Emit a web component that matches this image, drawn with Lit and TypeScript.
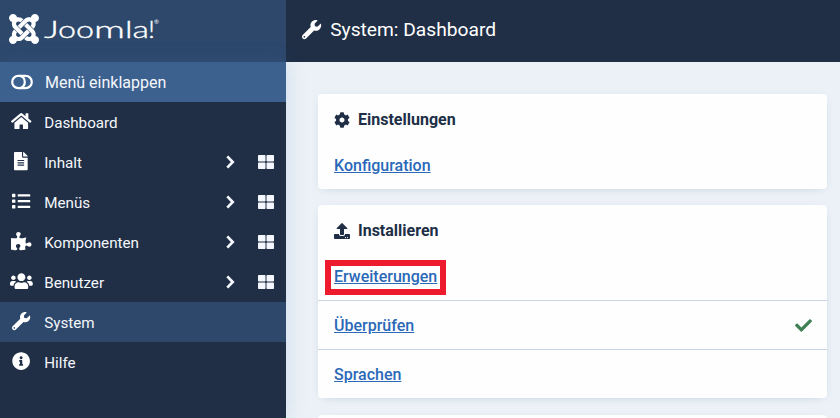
import { LitElement, html, svg, css } from "lit";
import { customElement, property } from "lit/decorators.js";
import { classMap } from "lit/directives/class-map.js";

const ICONS: Record<string, [string, string]> = {
  wrench: ["0 0 512 512", "M507.73 109.1c-2.24-9.03-13.54-12.09-20.12-5.51l-74.36 74.36-67.88-11.31-11.31-67.88 74.36-74.36c6.62-6.62 3.43-17.9-5.66-20.16-47.38-11.74-99.55.91-136.58 37.93-39.64 39.64-50.55 97.1-34.05 147.2L18.74 402.76c-24.99 24.99-24.99 65.51 0 90.5 24.99 24.99 65.51 24.99 90.5 0l213.21-213.21c50.12 16.71 107.47 5.68 147.37-34.22 37.07-37.07 49.7-89.32 37.91-136.73zM64 472c-13.25 0-24-10.75-24-24 0-13.26 10.75-24 24-24s24 10.74 24 24c0 13.25-10.75 24-24 24z"],
  home: ["0 0 576 512", "M280.37 148.26L96 300.11V464a16 16 0 0 0 16 16l112.06-.29a16 16 0 0 0 15.92-16V368a16 16 0 0 1 16-16h64a16 16 0 0 1 16 16v95.64a16 16 0 0 0 16 16.05L464 480a16 16 0 0 0 16-16V300L295.67 148.26a12.19 12.19 0 0 0-15.3 0zM571.6 251.47L488 182.56V44.05a12 12 0 0 0-12-12h-56a12 12 0 0 0-12 12v72.61L318.47 43a48 48 0 0 0-61 0L4.34 251.47a12 12 0 0 0-1.6 16.9l25.5 31A12 12 0 0 0 45.15 301l235.22-193.74a12.19 12.19 0 0 1 15.3 0L530.9 301a12 12 0 0 0 16.9-1.6l25.5-31a12 12 0 0 0-1.7-16.93z"],
  file: ["0 0 384 512", "M224 136V0H24C10.7 0 0 10.7 0 24v464c0 13.3 10.7 24 24 24h336c13.3 0 24-10.7 24-24V160H248c-13.2 0-24-10.8-24-24zm64 236c0 6.6-5.4 12-12 12H108c-6.6 0-12-5.4-12-12v-8c0-6.6 5.4-12 12-12h168c6.6 0 12 5.4 12 12v8zm0-64c0 6.6-5.4 12-12 12H108c-6.6 0-12-5.4-12-12v-8c0-6.6 5.4-12 12-12h168c6.6 0 12 5.4 12 12v8zm0-72v8c0 6.6-5.4 12-12 12H108c-6.6 0-12-5.4-12-12v-8c0-6.6 5.4-12 12-12h168c6.6 0 12 5.4 12 12zm96-114.1v6.1H256V0h6.1c6.4 0 12.5 2.5 17 7l97.9 98c4.5 4.5 7 10.6 7 16.9z"],
  list: ["0 0 512 512", "M80 368H16a16 16 0 0 0-16 16v64a16 16 0 0 0 16 16h64a16 16 0 0 0 16-16v-64a16 16 0 0 0-16-16zm0-320H16A16 16 0 0 0 0 64v64a16 16 0 0 0 16 16h64a16 16 0 0 0 16-16V64a16 16 0 0 0-16-16zm0 160H16a16 16 0 0 0-16 16v64a16 16 0 0 0 16 16h64a16 16 0 0 0 16-16v-64a16 16 0 0 0-16-16zm416 176H176a16 16 0 0 0-16 16v32a16 16 0 0 0 16 16h320a16 16 0 0 0 16-16v-32a16 16 0 0 0-16-16zm0-320H176a16 16 0 0 0-16 16v32a16 16 0 0 0 16 16h320a16 16 0 0 0 16-16V80a16 16 0 0 0-16-16zm0 160H176a16 16 0 0 0-16 16v32a16 16 0 0 0 16 16h320a16 16 0 0 0 16-16v-32a16 16 0 0 0-16-16z"],
  puzzle: ["0 0 576 512", "M519.442 288.651c-41.519 0-59.5 31.593-82.058 31.593C377.409 320.244 432 144 432 144s-196.288 80-196.288-3.297c0-35.827 36.288-46.25 36.288-85.985C272 19.216 243.885 0 210.539 0c-34.654 0-66.366 18.891-66.366 56.346 0 41.364 31.711 59.277 31.711 81.75C175.885 207.719 0 166.758 0 166.758v333.237s178.635 41.047 178.635-28.662c0-22.473-40-40.107-40-81.471 0-37.456 29.25-56.346 63.577-56.346 33.673 0 61.788 19.216 61.788 54.717 0 39.735-36.288 50.158-36.288 85.985 0 60.803 129.675 25.73 181.23 25.73 0 0-34.725-120.101 25.827-120.101 35.962 0 46.423 36.152 86.308 36.152C556.712 416 576 387.99 576 354.443c0-34.199-18.962-65.792-56.558-65.792z"],
  users: ["0 0 640 512", "M96 224c35.3 0 64-28.7 64-64s-28.7-64-64-64-64 28.7-64 64 28.7 64 64 64zm448 0c35.3 0 64-28.7 64-64s-28.7-64-64-64-64 28.7-64 64 28.7 64 64 64zm32 32h-64c-17.6 0-33.5 7.1-45.1 18.6 40.3 22.1 68.9 62 75.1 109.4h66c17.7 0 32-14.3 32-32v-32c0-35.3-28.7-64-64-64zm-256 0c61.9 0 112-50.1 112-112S381.9 32 320 32 208 82.1 208 144s50.1 112 112 112zm76.8 32h-8.3c-20.8 10-43.9 16-68.5 16s-47.6-6-68.5-16h-8.3C179.6 288 128 339.6 128 403.2V432c0 26.5 21.5 48 48 48h288c26.5 0 48-21.5 48-48v-28.8c0-63.6-51.6-115.2-115.2-115.2zm-223.7-13.4C161.5 263.1 145.6 256 128 256H64c-35.3 0-64 28.7-64 64v32c0 17.7 14.3 32 32 32h65.9c6.3-47.4 34.9-87.3 75.2-109.4z"],
  info: ["0 0 512 512", "M256 8C119.043 8 8 119.083 8 256c0 136.997 111.043 248 248 248s248-111.003 248-248C504 119.083 392.957 8 256 8zm0 110c23.196 0 42 18.804 42 42s-18.804 42-42 42-42-18.804-42-42 18.804-42 42-42zm56 254c0 6.627-5.373 12-12 12h-88c-6.627 0-12-5.373-12-12v-24c0-6.627 5.373-12 12-12h12v-64h-12c-6.627 0-12-5.373-12-12v-24c0-6.627 5.373-12 12-12h64c6.627 0 12 5.373 12 12v100h12c6.627 0 12 5.373 12 12v24z"],
  cog: ["0 0 512 512", "M487.4 315.7l-42.6-24.6c4.3-23.2 4.3-47 0-70.2l42.6-24.6c4.9-2.8 7.1-8.6 5.5-14-11.1-35.6-30-67.8-54.7-94.6-3.8-4.1-10-5.1-14.8-2.3L380.8 110c-17.9-15.4-38.5-27.3-60.8-35.1V25.8c0-5.6-3.9-10.5-9.4-11.7-36.7-8.2-74.3-7.8-109.2 0-5.5 1.2-9.4 6.1-9.4 11.7V75c-22.2 7.9-42.8 19.8-60.8 35.1L88.7 85.5c-4.9-2.8-11-1.9-14.8 2.3-24.7 26.7-43.6 58.9-54.7 94.6-1.7 5.4.6 11.2 5.5 14L67.3 221c-4.3 23.2-4.3 47 0 70.2l-42.6 24.6c-4.9 2.8-7.1 8.6-5.5 14 11.1 35.6 30 67.8 54.7 94.6 3.8 4.1 10 5.1 14.8 2.3l42.6-24.6c17.9 15.4 38.5 27.3 60.8 35.1v49.2c0 5.6 3.9 10.5 9.4 11.7 36.7 8.2 74.3 7.8 109.2 0 5.5-1.2 9.4-6.1 9.4-11.7v-49.2c22.2-7.9 42.8-19.8 60.8-35.1l42.6 24.6c4.9 2.8 11 1.9 14.8-2.3 24.7-26.7 43.6-58.9 54.7-94.6 1.5-5.5-.7-11.3-5.6-14.1zM256 336c-44.1 0-80-35.9-80-80s35.9-80 80-80 80 35.9 80 80-35.9 80-80 80z"],
  upload: ["0 0 512 512", "M296 384h-80c-13.3 0-24-10.7-24-24V192h-87.7c-17.8 0-26.7-21.5-14.1-34.1L242.3 5.7c7.5-7.5 19.8-7.5 27.3 0l152.2 152.2c12.6 12.6 3.7 34.1-14.1 34.1H320v168c0 13.3-10.7 24-24 24zm216-8v112c0 13.3-10.7 24-24 24H24c-13.3 0-24-10.7-24-24V376c0-13.3 10.7-24 24-24h136v8c0 30.9 25.1 56 56 56h80c30.9 0 56-25.1 56-56v-8h136c13.3 0 24 10.7 24 24zm-124 88c0-11-9-20-20-20s-20 9-20 20 9 20 20 20 20-9 20-20zm64 0c0-11-9-20-20-20s-20 9-20 20 9 20 20 20 20-9 20-20z"],
  check: ["0 0 512 512", "M173.898 439.404l-166.4-166.4c-9.997-9.997-9.997-26.206 0-36.204l36.203-36.204c9.997-9.998 26.207-9.998 36.204 0L192 312.69 432.095 72.596c9.997-9.997 26.207-9.997 36.204 0l36.203 36.204c9.997 9.997 9.997 26.206 0 36.204l-294.4 294.401c-9.998 9.997-26.207 9.997-36.204-.001z"],
  grid: ["0 0 512 512", "M296 32h192c13.255 0 24 10.745 24 24v160c0 13.255-10.745 24-24 24H296c-13.255 0-24-10.745-24-24V56c0-13.255 10.745-24 24-24zm-80 0H24C10.745 32 0 42.745 0 56v160c0 13.255 10.745 24 24 24h192c13.255 0 24-10.745 24-24V56c0-13.255-10.745-24-24-24zM0 296v160c0 13.255 10.745 24 24 24h192c13.255 0 24-10.745 24-24V296c0-13.255-10.745-24-24-24H24c-13.255 0-24 10.745-24 24zm296 184h192c13.255 0 24-10.745 24-24V296c0-13.255-10.745-24-24-24H296c-13.255 0-24 10.745-24 24v160c0 13.255 10.745 24 24 24z"],
  joomla: ["0 32 448 448", "M.6 92.1C.6 58.8 27.4 32 60.4 32c30 0 54.5 21.9 59.2 50.2 32.6-7.6 67.1.6 96.5 30l-44.3 44.3c-20.5-20.5-42.6-16.3-55.4-3.5-14.3 14.3-14.3 37.9 0 52.2l99.5 99.5-44 44.3c-87.7-87.2-49.7-49.7-99.8-99.7-26.8-26.5-35-64.8-24.8-98.9C20.4 144.6.6 120.7.6 92.1zm129.5 116.4l44.3 44.3c10-10 89.7-89.7 99.7-99.8 14.3-14.3 37.6-14.3 51.9 0 12.8 12.8 17 35-3.5 55.4l44 44.3c31.2-31.2 38.5-67.6 28.9-101.2 29.2-4.1 51.9-29.2 51.9-59.5 0-33.2-26.8-60.1-59.8-60.1-30.3 0-55.4 22.5-59.5 51.6-33.8-9.9-71.7-1.5-98.3 25.1-18.3 19.1-71.1 71.5-99.6 99.9zm266.3 152.2c8.2-32.7-.9-68.5-26.3-93.9-11.8-12.2 5 4.7-99.5-99.7l-44.3 44.3 99.7 99.7c14.3 14.3 14.3 37.6 0 51.9-12.8 12.8-35 17-55.4-3.5l-44 44.3c27.6 30.2 68 38.8 102.7 28 5.5 27.4 29.7 48.1 58.9 48.1 33 0 59.8-26.8 59.8-60.1 0-30.2-22.5-55-51.6-59.1zm-84.3-53.1l-44-44.3c-87 86.4-50.4 50.4-99.7 99.8-14.3 14.3-37.6 14.3-51.9 0-13.1-13.4-16.9-35.3 3.2-55.4l-44-44.3c-30.2 30.2-38 65.2-29.5 98.3-26.7 6-46.2 29.9-46.2 58.2C0 453.2 26.8 480 59.8 480c28.6 0 52.5-19.8 58.6-46.7 32.7 8.2 68.5-.6 94.2-26 32.1-32 12.2-12.4 99.5-99.7z"],
};

@customElement("ui-icon")
class UiIcon extends LitElement {
  @property() name = "";
  static styles = css`
    :host { display: inline-flex; flex: none; height: 18.24px; }
    svg { display: block; height: 100%; width: auto; fill: currentColor; overflow: visible; }
    .line { fill: none; stroke: currentColor; }
  `;
  render() {
    if (this.name === "toggle") {
      return html`<svg viewBox="0 0 22 16" width="22" height="16">
        ${svg`<rect class="line" x="1.2" y="1.8" width="19.6" height="12.4" rx="6.2" stroke-width="2.2"/><path class="line" d="M8.5 1.8C12 2.6 13.8 5 13.8 8S12 13.4 8.5 14.2" stroke-width="2.2"/>`}
      </svg>`;
    }
    if (this.name === "chevron") {
      return html`<svg viewBox="0 0 9 14" width="9" height="14">
        ${svg`<path class="line" d="M1.3 1.4L6.7 7L1.3 12.6" stroke-width="2.7"/>`}
      </svg>`;
    }
    const [box, d] = ICONS[this.name];
    return html`<svg viewBox=${box}>${svg`<path d=${d}/>`}</svg>`;
  }
}

interface MenuItem { icon: string; label: string; sub?: boolean; active?: boolean; }
const MENU: MenuItem[] = [
  { icon: "home", label: "Dashboard" },
  { icon: "file", label: "Inhalt", sub: true },
  { icon: "list", label: "Menüs", sub: true },
  { icon: "puzzle", label: "Komponenten", sub: true },
  { icon: "users", label: "Benutzer", sub: true },
  { icon: "wrench", label: "System", active: true },
  { icon: "info", label: "Hilfe" },
];

interface Row { label: string; marked?: boolean; ok?: boolean; }
const CARDS: { icon: string; title: string; rows: Row[] }[] = [
  { icon: "cog", title: "Einstellungen", rows: [{ label: "Konfiguration" }] },
  {
    icon: "upload", title: "Installieren",
    rows: [{ label: "Erweiterungen", marked: true }, { label: "Überprüfen", ok: true }, { label: "Sprachen" }],
  },
];

@customElement("app-root")
class AppRoot extends LitElement {
  static styles = css`
    :host {
      display: grid; grid-template: 62px 1fr / 286px 1fr;
      width: 100%; height: 100vh; overflow: hidden;
      font-family: Roboto, sans-serif; font-size: 16px; background: #ebf1f6; color: #fff;
    }
    * { box-sizing: border-box; }
    .brand { background: #2d486b; display: flex; align-items: center; padding: 0 0 4px 9px; }
    .brand ui-icon { height: 30px; }
    .word { display: block; width: 118px; height: 30px; margin-left: 5px; fill: #fff; stroke: #fff; stroke-width: .35px; font-family: Lato, sans-serif; font-weight: 300; overflow: visible; }
    .reg { font-size: 6px; font-weight: 400; stroke: none; }
    .top { background: #202f46; display: flex; align-items: center; padding: 0 0 3px 16px; gap: 9px; font-size: 19.2px; }
    .top ui-icon { height: 19.2px; }
    .side { background: #202f46; box-shadow: 0 0 20px rgba(60, 110, 200, .16); z-index: 1; }
    .item { height: 40px; display: flex; align-items: center; font-size: 15.2px; color: #f4f7fb; padding: 1px 12px 0 9.6px; }
    .item .slot { width: 23px; height: 21px; display: flex; justify-content: center; margin-right: 11.6px; flex: none; color: #fff; }
    .label { flex: 1; }
    .item.collapse { background: #3d618f; font-size: 16px; padding: 0 12px 0 10px; }
    .collapse .slot { align-items: center; margin-right: 12px; }
    .collapse .slot ui-icon { height: 16px; }
    .item.active { background: #2d486b; }
    .arrow { height: 14px; margin: -1px 23px 0 0; }
    .tiles { height: 16px; margin-top: -1px; }
    main { padding: 32px 13px 0 32px; display: flex; flex-direction: column; gap: 16px; min-height: 0; }
    .card { background: #fefefe; border-radius: 4px; box-shadow: 0 2px 10px -6px rgba(30, 70, 130, .4); flex: none; }
    .head { height: 47px; display: flex; align-items: center; gap: 8px; padding: 4px 16px 0; color: #202f46; font-weight: 700; }
    .head ui-icon { height: 16px; }
    .row { height: 48px; display: flex; align-items: center; justify-content: space-between; padding: 1px 15px 0 16px; }
    .row + .row { height: 49px; border-top: 1px solid #c8d5e7; }
    a { color: #2a69b8; text-decoration: underline; font-weight: 500; }
    .marked { outline: 6px solid #ee1b2e; padding: 1px 3px 3px; margin: 2px 0 0 -3px; }
    .row ui-icon { height: 17px; color: #3f8055; }
    .rest { height: 60px; margin-top: 1px; }
  `;
  render() {
    return html`
      <div class="brand">
        <ui-icon name="joomla"></ui-icon>
        <svg class="word" viewBox="0 0 118 30">
          <text y="24" font-size="24"><tspan x="0" textLength="15" lengthAdjust="spacingAndGlyphs">J</tspan><tspan x="14" textLength="36" lengthAdjust="spacingAndGlyphs">oo</tspan><tspan x="50" textLength="31" lengthAdjust="spacingAndGlyphs">m</tspan><tspan x="81" textLength="24" lengthAdjust="spacingAndGlyphs">la</tspan><tspan x="104" textLength="7" lengthAdjust="spacingAndGlyphs">!</tspan></text>
          <text class="reg" x="110" y="10">®</text>
        </svg>
      </div>
      <header class="top"><ui-icon name="wrench"></ui-icon><span>System: Dashboard</span></header>
      <nav class="side">
        <div class="item collapse"><span class="slot"><ui-icon name="toggle"></ui-icon></span><span class="label">Menü einklappen</span></div>
        ${MENU.map((m) => html`
          <div class=${classMap({ item: true, active: !!m.active })}>
            <span class="slot"><ui-icon name=${m.icon}></ui-icon></span>
            <span class="label">${m.label}</span>
            ${m.sub ? html`<ui-icon class="arrow" name="chevron"></ui-icon><ui-icon class="tiles" name="grid"></ui-icon>` : ""}
          </div>`)}
      </nav>
      <main>
        ${CARDS.map((c) => html`
          <section class="card">
            <div class="head"><ui-icon name=${c.icon}></ui-icon><span>${c.title}</span></div>
            ${c.rows.map((r) => html`
              <div class="row">
                <a class=${classMap({ marked: !!r.marked })}>${r.label}</a>
                ${r.ok ? html`<ui-icon name="check"></ui-icon>` : ""}
              </div>`)}
          </section>`)}
        <section class="card rest"></section>
      </main>`;
  }
}
